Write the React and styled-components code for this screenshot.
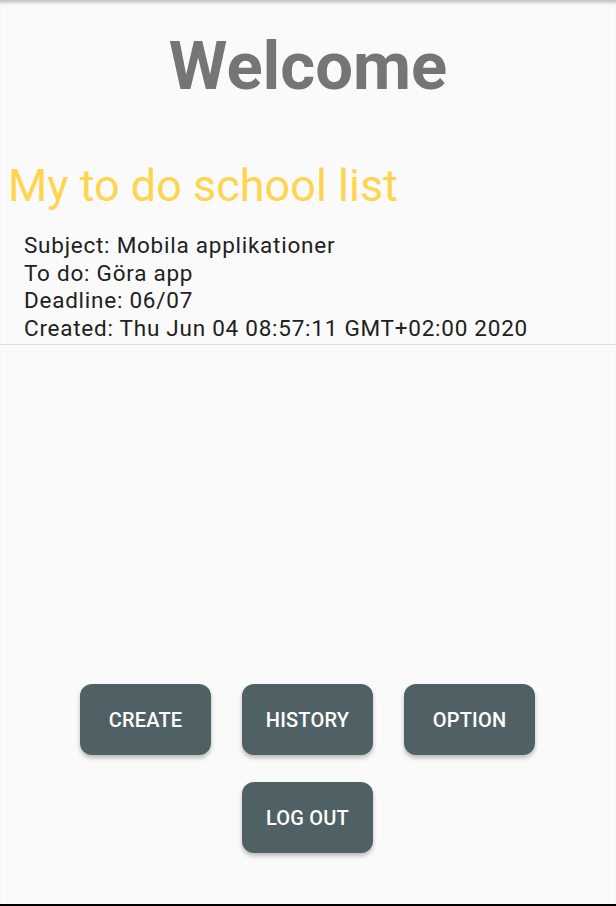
import React from 'react';
import styled, { createGlobalStyle } from 'styled-components';

const GlobalStyle = createGlobalStyle`
  html, body {
    margin: 0;
    padding: 0;
    background: #fafafa;
  }
  * {
    box-sizing: border-box;
  }
`

const items = [
  {
    subject: 'Mobila applikationer',
    todo: 'Göra app',
    deadline: '06/07',
    created: 'Thu Jun 04 08:57:11 GMT+02:00 2020',
  },
]

function App() {
  return (
    <>
      <GlobalStyle />
      <Page>
        <Welcome>Welcome</Welcome>
        <ListTitle>My to do school list</ListTitle>
        <List>
          {items.map((item, i) => (
            <Item key={i}>
              <p>Subject: {item.subject}</p>
              <p>To do: {item.todo}</p>
              <p>Deadline: {item.deadline}</p>
              <p>Created: {item.created}</p>
            </Item>
          ))}
        </List>
        <Buttons>
          <Button>CREATE</Button>
          <Button>HISTORY</Button>
          <Button>OPTION</Button>
          <Button $col={2}>LOG OUT</Button>
        </Buttons>
        <BottomBar />
      </Page>
    </>
  )
}

export default App

const Page = styled.div`
  width: 100%;
  height: 906px;
  display: flex;
  flex-direction: column;
  background: #fafafa;
  font-family: Roboto, "Liberation Sans", sans-serif;
  box-shadow: inset 0 5px 4px -3px rgba(0, 0, 0, 0.28);
`

const Welcome = styled.h1`
  margin: 0;
  padding-top: 27px;
  text-align: center;
  font-size: 67px;
  font-weight: bold;
  line-height: normal;
  color: #757575;
`

const ListTitle = styled.h2`
  margin: 54px 0 0;
  padding-left: 8px;
  font-size: 45px;
  font-weight: normal;
  line-height: normal;
  color: #ffd54f;
`

const List = styled.div`
  margin-top: 20px;
`

const Item = styled.div`
  padding: 0 0 2px 24px;
  border-bottom: 1px solid #dcdcdc;

  p {
    margin: 0;
    font-size: 22.5px;
    letter-spacing: 0.75px;
    line-height: 27.6px;
    color: #212121;
  }
`

const Buttons = styled.div`
  margin-top: auto;
  padding: 0 1px 51px 0;
  display: grid;
  grid-template-columns: repeat(3, 131px);
  justify-content: center;
  column-gap: 31px;
  row-gap: 27px;
`

const Button = styled.button`
  grid-column: ${props => props.$col || 'auto'};
  height: 71px;
  border: none;
  border-radius: 12px;
  background: #4f6164;
  color: #ffffff;
  font-family: Roboto, "Liberation Sans", sans-serif;
  font-size: 20px;
  font-weight: 500;
  letter-spacing: 0.2px;
  box-shadow: 0 3px 4px rgba(0, 0, 0, 0.25);
  cursor: pointer;
`

const BottomBar = styled.div`
  height: 2px;
  background: #000000;
`
